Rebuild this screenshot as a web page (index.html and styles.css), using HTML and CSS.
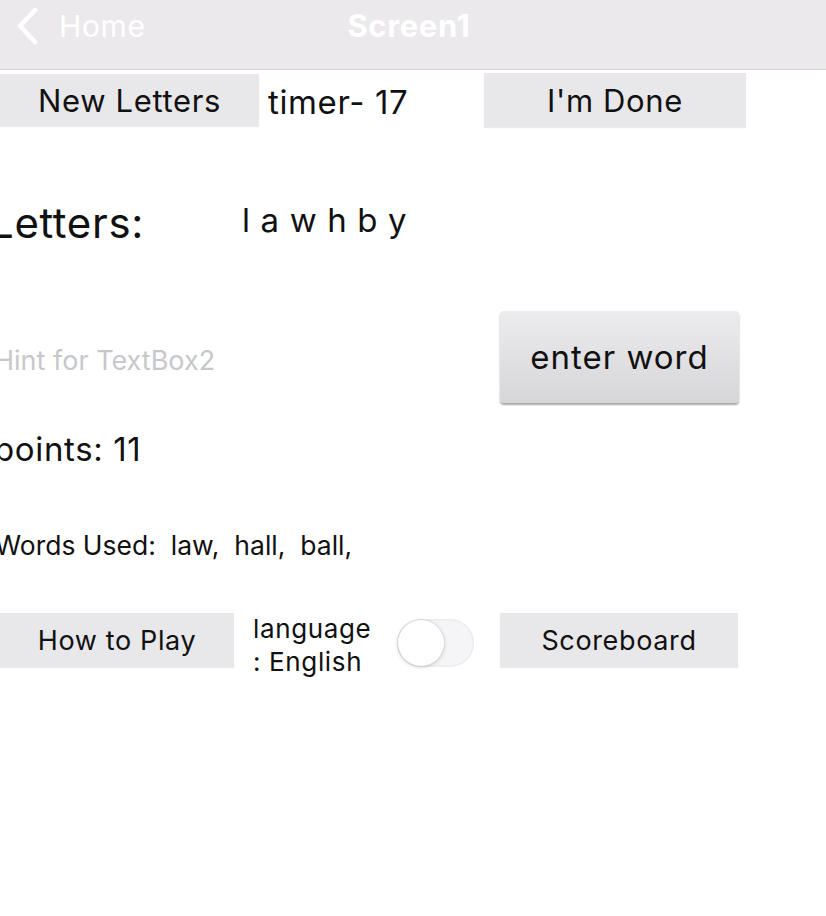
FILE: index.html
```html
<!DOCTYPE html>
<html>
<head>
<meta charset="utf-8">
<link rel="stylesheet" href="styles.css">
</head>
<body>
<div class="screen">
  <header class="nav">
    <div class="back">
      <svg class="chev" width="24" height="38" viewBox="0 0 24 38"><path d="M20 3 L5 19 L20 35" fill="none" stroke="#fff" stroke-width="4.5" stroke-linecap="round" stroke-linejoin="round"/></svg>
      <span class="back-label">Home</span>
    </div>
    <div class="title">Screen1</div>
  </header>

  <div class="row row-top">
    <div class="btn btn-new">New Letters</div>
    <div class="timer">timer- 17</div>
    <div class="btn btn-done">I'm Done</div>
  </div>

  <div class="row row-letters">
    <div class="letters-label">Letters:</div>
    <div class="letters">l a w h b y</div>
  </div>

  <div class="row row-entry">
    <div class="hint">Hint for TextBox2</div>
    <div class="btn-raised">enter word</div>
  </div>

  <div class="row row-points">
    <div class="points">points: 11</div>
  </div>

  <div class="row row-words">
    <div class="words">Words Used:&nbsp; law,&nbsp; hall,&nbsp; ball,</div>
  </div>

  <div class="row row-bottom">
    <div class="btn btn-how">How to Play</div>
    <div class="lang">language<br>: English</div>
    <div class="toggle"><div class="knob"></div></div>
    <div class="btn btn-score">Scoreboard</div>
  </div>
</div>
</body>
</html>
```
FILE: styles.css
```css
html, body {
  margin: 0;
  padding: 0;
  background: #ffffff;
}
body {
  width: 826px;
  height: 916px;
  overflow: hidden;
  font-family: "Inter", "Liberation Sans", sans-serif;
  color: #111111;
  letter-spacing: 0.04em;
}
.screen {
  display: flex;
  flex-direction: column;
}
.nav {
  height: 69px;
  background: #ebe9ec;
  border-bottom: 1px solid #d4d3d6;
  position: relative;
}
.back {
  display: flex;
  align-items: center;
  height: 52px;
  padding-left: 15px;
  gap: 20px;
  color: #ffffff;
}
.chev {
  display: block;
}
.back-label {
  font-size: 30px;
}
.title {
  position: absolute;
  left: 0;
  right: 0;
  top: 0;
  height: 52px;
  line-height: 52px;
  text-align: center;
  margin-left: -8px;
  font-size: 31px;
  font-weight: 700;
  color: #ffffff;
  letter-spacing: 0.02em;
}
.row {
  display: flex;
  align-items: center;
}
.btn {
  background: #e8e7ea;
  box-shadow: 0 1px 1px rgba(0,0,0,0.08);
  display: flex;
  align-items: center;
  justify-content: center;
  font-size: 31px;
}
.row-top {
  margin-top: 3px;
  height: 54px;
}
.btn-new {
  width: 259px;
  height: 52px;
}
.timer {
  width: 216px;
  margin-left: 9px;
  font-size: 33px;
  padding-top: 4px;
}
.btn-done {
  width: 262px;
  height: 54px;
}
.row-letters {
  margin-top: 63px;
  height: 64px;
}
.letters-label {
  width: 252px;
  margin-left: -10px;
  font-size: 42px;
}
.letters {
  font-size: 33px;
  margin-top: -4px;
}
.row-entry {
  margin-top: 56px;
  height: 94px;
  justify-content: space-between;
}
.hint {
  margin-left: -6px;
  font-size: 27px;
  color: #c7c7cc;
  padding-top: 6px;
  letter-spacing: 0;
}
.btn-raised {
  width: 239px;
  height: 92px;
  margin-right: 87px;
  border-radius: 4px;
  background: linear-gradient(#ecebee, #d6d5d8);
  box-shadow: 0 2px 2px rgba(0,0,0,0.35);
  display: flex;
  align-items: center;
  justify-content: center;
  font-size: 33px;
  letter-spacing: 0.03em;
}
.row-points {
  margin-top: 25px;
  height: 40px;
}
.points {
  margin-left: -6px;
  font-size: 33px;
}
.row-words {
  margin-top: 56px;
  height: 40px;
}
.words {
  margin-left: -5px;
  font-size: 26.5px;
  white-space: pre;
  letter-spacing: 0;
}
.row-bottom {
  margin-top: 47px;
  height: 64px;
  align-items: flex-start;
}
.btn-how {
  width: 234px;
  height: 54px;
  margin-top: 1px;
  font-size: 27px;
}
.lang {
  margin-left: 19px;
  width: 144px;
  font-size: 26px;
  line-height: 33px;
}
.toggle {
  width: 77px;
  height: 48px;
  margin-top: 7px;
  border-radius: 24px;
  background: #f5f5f7;
  box-shadow: inset 0 0 0 1.5px #ececef;
  position: relative;
}
.knob {
  position: absolute;
  left: 1px;
  top: 1px;
  width: 46px;
  height: 46px;
  border-radius: 50%;
  background: #ffffff;
  box-shadow: 0 1px 4px rgba(0,0,0,0.18), 0 0 0 1px rgba(0,0,0,0.04);
}
.btn-score {
  margin-left: 26px;
  width: 238px;
  height: 54px;
  margin-top: 1px;
  font-size: 27px;
}
```
